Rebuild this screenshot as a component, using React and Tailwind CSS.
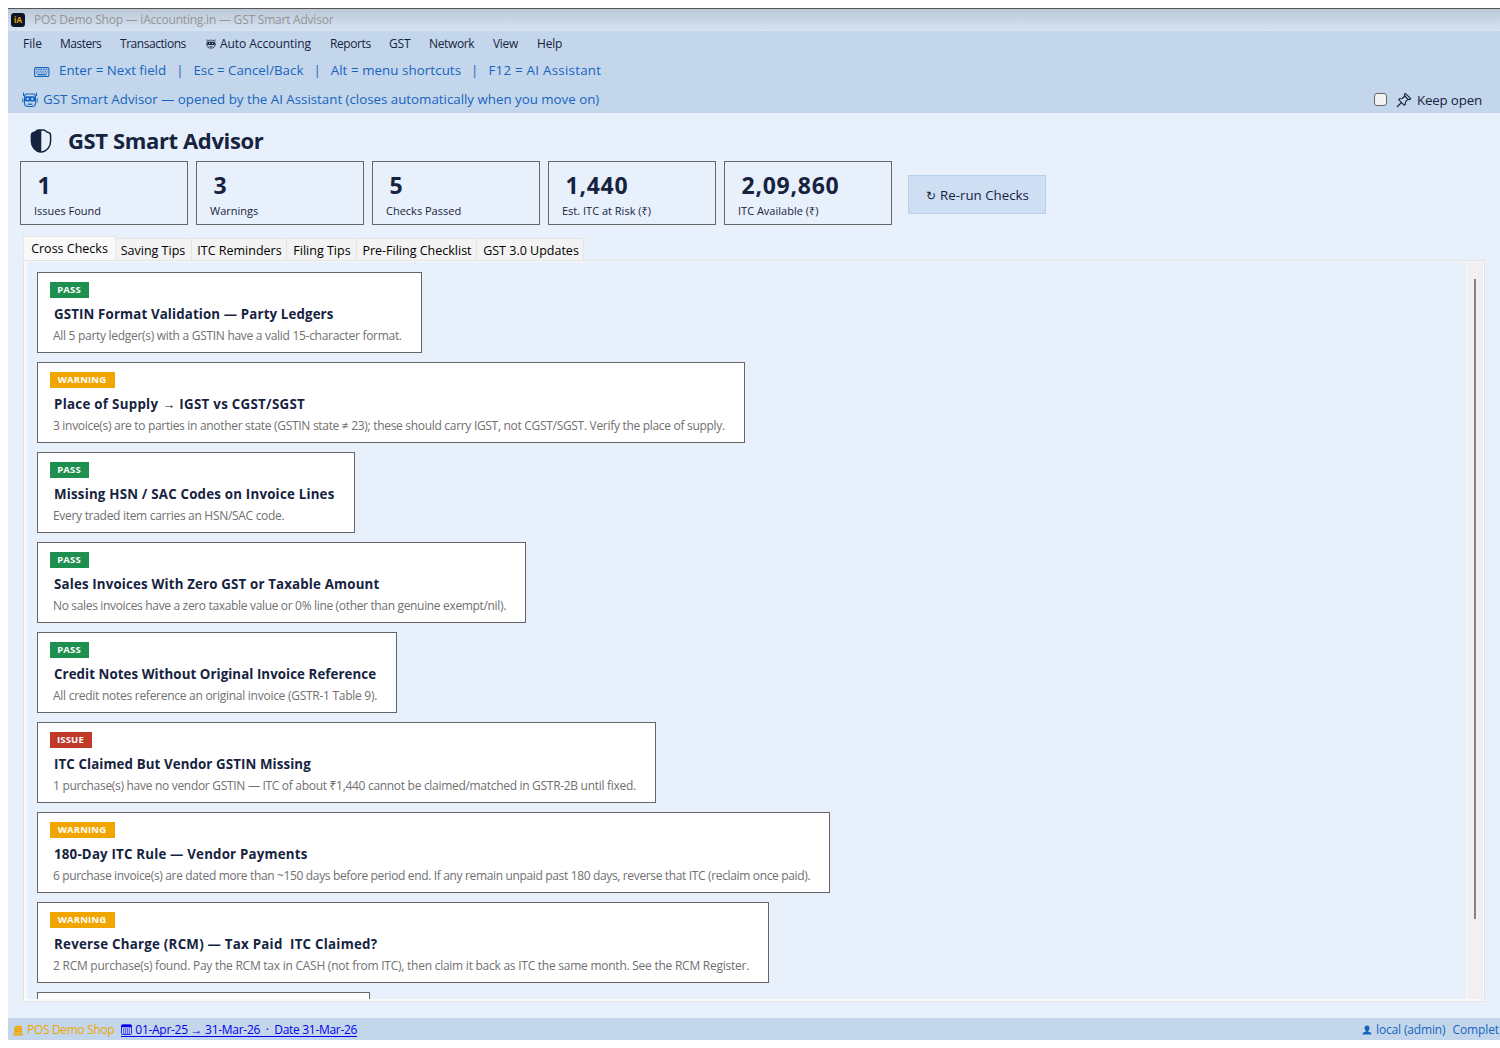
import React, { useState } from "react";

const menuItems = [
    { label: "File", className: "w-[37px]" },
    { label: "Masters", className: "w-[60px] tracking-[-0.500px]" },
    { label: "Transactions", className: "w-[85px] tracking-[-0.450px]" },
    { label: "Auto Accounting", className: "w-[125px] tracking-[-0.050px]", robot: true },
    { label: "Reports", className: "w-[59px] tracking-[-0.400px]" },
    { label: "GST", className: "w-10 tracking-[-0.200px]" },
    { label: "Network", className: "w-16 tracking-[-0.350px]" },
    { label: "View", className: "w-11 tracking-[-0.300px]" },
    { label: "Help", className: "w-10 tracking-[-0.200px]" },
];

const stats = [
    { value: "1", label: "Issues Found" },
    { value: "3", label: "Warnings" },
    { value: "5", label: "Checks Passed" },
    { value: "1,440", label: "Est. ITC at Risk (₹)" },
    { value: "2,09,860", label: "ITC Available (₹)" },
];

const tabs = [
    { label: "Saving Tips", className: "w-[76px] pr-px" },
    { label: "ITC Reminders", className: "w-[95px] pl-px" },
    { label: "Filing Tips", className: "w-[70px] pl-px" },
    { label: "Pre-Filing Checklist", className: "w-[120px] pl-px" },
    { label: "GST 3.0 Updates", className: "w-[107px] pl-0.5" },
];

const checks = [
    {
        status: "PASS",
        title: "GSTIN Format Validation — Party Ledgers",
        text: "All 5 party ledger(s) with a GSTIN have a valid 15-character format.",
        width: "w-[385px]",
        titleTracking: "tracking-[0.130px]",
        textTracking: "tracking-[-0.290px]",
    },
    {
        status: "WARNING",
        title: "Place of Supply → IGST vs CGST/SGST",
        text: "3 invoice(s) are to parties in another state (GSTIN state ≠ 23); these should carry IGST, not CGST/SGST. Verify the place of supply.",
        width: "w-[708px]",
        titleTracking: "tracking-[0.290px]",
        textTracking: "tracking-[-0.305px]",
    },
    {
        status: "PASS",
        title: "Missing HSN / SAC Codes on Invoice Lines",
        text: "Every traded item carries an HSN/SAC code.",
        width: "w-[318px]",
        titleTracking: "tracking-[0.210px]",
        textTracking: "tracking-[-0.300px]",
    },
    {
        status: "PASS",
        title: "Sales Invoices With Zero GST or Taxable Amount",
        text: "No sales invoices have a zero taxable value or 0% line (other than genuine exempt/nil).",
        width: "w-[489px]",
        titleTracking: "tracking-[0.160px]",
        textTracking: "tracking-[-0.335px]",
    },
    {
        status: "PASS",
        title: "Credit Notes Without Original Invoice Reference",
        text: "All credit notes reference an original invoice (GSTR-1 Table 9).",
        width: "w-[360px]",
        titleTracking: "tracking-[0.065px]",
        textTracking: "tracking-[-0.270px]",
    },
    {
        status: "ISSUE",
        title: "ITC Claimed But Vendor GSTIN Missing",
        text: "1 purchase(s) have no vendor GSTIN — ITC of about ₹1,440 cannot be claimed/matched in GSTR-2B until fixed.",
        width: "w-[619px]",
        titleTracking: "tracking-[0.100px]",
        textTracking: "tracking-[-0.300px]",
    },
    {
        status: "WARNING",
        title: "180-Day ITC Rule — Vendor Payments",
        text: "6 purchase invoice(s) are dated more than ~150 days before period end. If any remain unpaid past 180 days, reverse that ITC (reclaim once paid).",
        width: "w-[793px]",
        titleTracking: "tracking-[0.190px]",
        textTracking: "tracking-[-0.350px]",
    },
    {
        status: "WARNING",
        title: "Reverse Charge (RCM) — Tax Paid  ITC Claimed?",
        text: "2 RCM purchase(s) found. Pay the RCM tax in CASH (not from ITC), then claim it back as ITC the same month. See the RCM Register.",
        width: "w-[732px]",
        titleTracking: "tracking-[0.250px]",
        textTracking: "tracking-[-0.250px]",
    },
];

const badgeStyles = {
    PASS: "w-[39px] bg-[#1e8f4e]",
    WARNING: "w-[65px] bg-[#f0a500]",
    ISSUE: "w-[42px] bg-[#c0392b]",
};

const RobotIcon = ({ className }) => (
    <svg viewBox="0 0 16 16" className={className} fill="none" stroke="currentColor">
        <path d="M1.500 0.500v3.500M14.500 0.500v3.500M0.800 6.500v4M15.200 6.500v4" strokeWidth="1" />
        <path d="M2.500 4.500Q2.500 2 5 2H11Q13.500 2 13.500 4.500V11Q13.500 14.500 10 14.500H6Q2.500 14.500 2.500 11Z" strokeWidth="1.100" />
        <rect x="2.500" y="4.300" width="11" height="5.200" rx="2" fill="currentColor" stroke="none" />
        <circle cx="5.700" cy="6.900" r="1.100" fill="#c4d6eb" stroke="none" />
        <circle cx="10.300" cy="6.900" r="1.100" fill="#c4d6eb" stroke="none" />
        <path d="M5.500 12.200h5" strokeWidth="1.300" />
    </svg>
);

const KeyboardIcon = () => (
    <svg viewBox="0 0 16 12" className="mt-0.5 h-3 w-4" fill="none" stroke="currentColor">
        <rect x="0.600" y="1.600" width="14.300" height="8.900" rx="1.300" strokeWidth="1.100" />
        <path d="M2 3.500h12M2.500 5.200h11M2 6.900h12" strokeWidth="1" strokeDasharray="1 0.700" />
        <path d="M3.500 8.700h9" strokeWidth="1.200" />
    </svg>
);

const PinIcon = () => (
    <svg viewBox="0 0 16 16" className="size-4" fill="none" stroke="currentColor" strokeWidth="1.100" strokeLinejoin="round">
        <path d="M9.300 1.300 14.700 6.700 13.400 7.700 12 7.300 9.500 9.800 9.300 12.500 8.300 13.300 2.700 7.700 3.600 6.700 6.300 6.500 8.800 4 8.300 2.500Z" />
        <path d="M5.500 10.500 1 15M8.800 4l3.200 3.300" />
    </svg>
);

const ShieldIcon = () => (
    <svg viewBox="0 0 22 24" className="h-6 w-[22px]" fill="none">
        <path d="M8.500 1H13.500Q15 1 16 2.300 17 3.300 19 3.700 20.600 4.200 20.600 7V12Q20.600 16 18.300 19 15 23 11 23 7 23 3.700 19 1.400 16 1.400 12V7Q1.400 4.200 3 3.700 5 3.300 6 2.300 7 1 8.500 1Z" stroke="currentColor" strokeWidth="1.500" />
        <path d="M11.300 1H8.500Q7 1 6 2.300 5 3.300 3 3.700 1.400 4.200 1.400 7V12Q1.400 16 3.700 19 7 23 11.300 23Z" fill="currentColor" />
    </svg>
);

const BuildingIcon = () => (
    <svg viewBox="0 0 10 11" className="h-[11px] w-2.5" fill="none" stroke="currentColor">
        <path d="M2.500 1.500h6M2 2v8M4 1v9M6.300 1v9M8.500 2v8M0 9.800h10" strokeWidth="1.300" />
        <path d="M1.500 4h7M1.500 6.500h7" strokeWidth="1.300" />
    </svg>
);

const CalendarIcon = () => (
    <svg viewBox="0 0 11 11" className="h-[11px] w-[11px]" fill="none" stroke="currentColor">
        <rect x="0.500" y="0.800" width="10" height="9.700" rx="1" strokeWidth="0.800" />
        <path d="M0.500 2h10" strokeWidth="2.500" />
        <path d="M2 5h7M2 7h7M2 9h7" strokeWidth="1" strokeDasharray="1.200 0.700" />
    </svg>
);

const UserIcon = () => (
    <svg viewBox="0 0 10 10" className="size-2.5 shrink-0" fill="currentColor">
        <path d="M5 0.500Q7.500 0.500 7.500 3 7.500 5 6.200 6V6.700Q9.500 7 9.500 9.500H0.500Q0.500 7 3.800 6.700V6Q2.500 5 2.500 3 2.500 0.500 5 0.500Z" />
    </svg>
);

const StatCard = ({ value, label }) => (
    <div className="h-16 w-[168px] border border-[#666] pl-[13px]">
        <div className="mt-2 pl-[3.500px] text-[23px] leading-[30px] font-bold tracking-[0.750px]">{value}</div>
        <div className="mt-[3px] text-[11px] leading-4">{label}</div>
    </div>
);

const CheckCard = ({ status, title, text, width, titleTracking, textTracking }) => (
    <div className={`h-[81px] shrink-0 border border-[#666] bg-white pl-3 ${width}`}>
        <div className={`mt-[9px] flex h-4 items-center justify-center pt-px pr-px text-[9.500px] font-bold tracking-[0.150px] text-white ${badgeStyles[status]}`}>
            {status}
        </div>
        <div className={`mt-[7px] pl-1 text-[13.300px] leading-[18px] font-bold whitespace-pre ${titleTracking}`}>{title}</div>
        <div className={`mt-1 pl-[3px] text-[12px] leading-[17px] whitespace-nowrap text-[#707070] ${textTracking}`}>{text}</div>
    </div>
);

const App = () => {
    const [keepOpen, setKeepOpen] = useState(false);

    return (
        <div className="h-[1048px] w-[1500px] overflow-hidden bg-white py-2 pl-2 font-['Open_Sans','Noto_Sans',sans-serif] text-[#16233f]">
            <div className="flex h-[1032px] flex-col border-t border-[#555] bg-[#e8f0fb]">
                {/* Title bar */}
                <div className="flex h-[22px] shrink-0 items-center bg-linear-to-b from-[#bac8d7] to-[#d6e3f2] pl-[3px] text-[12px] text-[#959595]">
                    <div className="flex size-[14px] items-center justify-center rounded-[3px] bg-[#0b1526] text-[8px] font-bold text-[#f0a500]">iA</div>
                    <span className="ml-[9px] tracking-[-0.220px]">POS Demo Shop — iAccounting.in — GST Smart Advisor</span>
                </div>

                <div className="h-[82px] shrink-0 bg-[#c4d6eb]">
                    {/* Menu */}
                    <div className="flex h-6 items-center pt-px pl-[15px] text-[12px]">
                        {menuItems.map((item) => (
                            <div key={item.label} className={`flex shrink-0 items-center gap-1 whitespace-nowrap ${item.className}`}>
                                {item.robot && <RobotIcon className="ml-px size-[10px]" />}
                                {item.label}
                            </div>
                        ))}
                    </div>
                    {/* Shortcut hints */}
                    <div className="flex h-[31px] items-center pl-[26px] text-[13.300px] text-[#1565c0]">
                        <KeyboardIcon />
                        <span className="ml-[9px]">Enter = Next field</span>
                        <span className="mx-[10px]">|</span>
                        <span>Esc = Cancel/Back</span>
                        <span className="mx-[10px]">|</span>
                        <span className="tracking-[0.080px]">Alt = menu shortcuts</span>
                        <span className="mx-[10px]">|</span>
                        <span className="tracking-[0.270px]">F12 = AI Assistant</span>
                    </div>
                    <div className="flex h-[27px] items-center justify-between pr-[18px] pl-3.5">
                        <div className="flex items-center gap-[5px] text-[13.300px] text-[#1565c0]">
                            <RobotIcon className="size-4" />
                            GST Smart Advisor — opened by the AI Assistant (closes automatically when you move on)
                        </div>
                        <label className="flex items-center text-[13.300px]">
                            <input
                                type="checkbox"
                                checked={keepOpen}
                                onChange={() => setKeepOpen(!keepOpen)}
                                className="mr-[9px] size-[13px] appearance-none rounded-[3px] border border-[#666] bg-[#f3f3f3]"
                            />
                            <PinIcon />
                            <span className="mt-0.5 ml-[5px] tracking-[-0.150px]">Keep open</span>
                        </label>
                    </div>
                </div>

                {/* Heading */}
                <div className="flex h-12 shrink-0 items-center pt-2 pl-[22px]">
                    <ShieldIcon />
                    <h1 className="-mt-0.5 ml-4 text-[22px] leading-8 font-bold tracking-[-0.370px]">GST Smart Advisor</h1>
                </div>

                <div className="flex h-16 shrink-0 gap-2 pl-3">
                    {stats.map((stat) => (
                        <StatCard key={stat.label} {...stat} />
                    ))}
                    <button className="mt-3.5 ml-2 flex h-[39px] w-[138px] items-center justify-center border border-[#b8d0ee] bg-[#cfdff3] pt-0.5 pl-px text-[13.300px]">
                        <span className="mr-1 text-[12px]">↻</span>Re-run Checks
                    </button>
                </div>

                {/* Tabs */}
                <div className="mt-[11px] flex h-6 shrink-0 items-end pl-[15px] text-[12.500px] whitespace-nowrap text-black">
                    <div className="flex h-6 w-[93px] justify-center border border-b-0 border-[#e8e5e3] bg-[#f9f9f9] pt-[3px]">Cross Checks</div>
                    {tabs.map((tab) => (
                        <div key={tab.label} className={`flex h-[22px] items-center justify-center border-t border-r border-[#e5e5e5] bg-[#f3f3f3] pt-[3px] ${tab.className}`}>
                            {tab.label}
                        </div>
                    ))}
                </div>

                <div className="ml-[15px] flex h-[742px] w-[1462px] shrink-0 border border-[#e5e3e1] bg-[#f9f9f9] pt-px pr-px pb-0.5 pl-[3px]">
                    <div className="flex flex-1 flex-col gap-[9px] overflow-hidden bg-[#e8f0fb] pt-2.5 pl-2.5">
                        {checks.map((check) => (
                            <CheckCard key={check.title} {...check} />
                        ))}
                        <div className="h-[81px] w-[333px] shrink-0 border border-[#666] bg-white"></div>
                    </div>
                    <div className="ml-px w-4 bg-[#f0f0f0] pt-[17px] pl-[7px]">
                        <div className="h-[640px] w-0.5 bg-[#858585]"></div>
                    </div>
                </div>

                {/* Status bar */}
                <div className="mt-auto flex h-[22px] shrink-0 items-center justify-between overflow-hidden bg-[#c4d6eb] pt-0.5 text-[12px] whitespace-nowrap">
                    <div className="flex items-center pl-[5px]">
                        <span className="flex items-center gap-1 tracking-[-0.330px] text-[#f0a500]"><BuildingIcon />POS Demo Shop</span>
                        <a className="ml-[7px] flex items-center gap-[3px] border-b border-[#0000ee] leading-[13px] tracking-[-0.290px] text-[#0000ee]">
                            <CalendarIcon />
                            01-Apr-25 → 31-Mar-26 &nbsp;·&nbsp; Date 31-Mar-26
                        </a>
                    </div>
                    <div className="flex w-[138px] items-center text-[#1565c0]">
                        <UserIcon />
                        <span className="ml-1 tracking-[-0.150px]">local (admin)</span>
                        <span className="ml-[7px] tracking-[-0.100px]">Complet</span>
                    </div>
                </div>
            </div>
        </div>
    );
};

export default App;
